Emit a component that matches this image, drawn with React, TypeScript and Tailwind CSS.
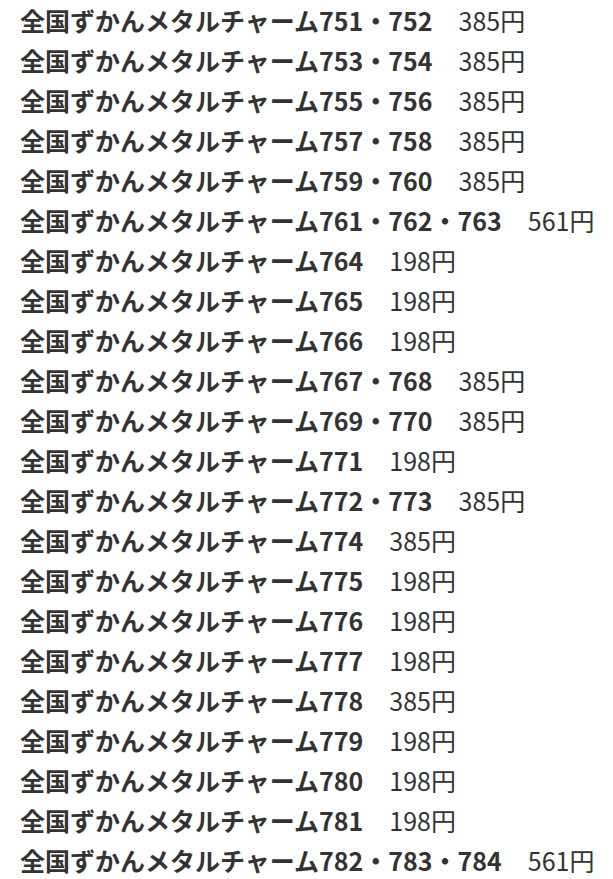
const items: [string, string][] = [
  ['751・752', '385円'],
  ['753・754', '385円'],
  ['755・756', '385円'],
  ['757・758', '385円'],
  ['759・760', '385円'],
  ['761・762・763', '561円'],
  ['764', '198円'],
  ['765', '198円'],
  ['766', '198円'],
  ['767・768', '385円'],
  ['769・770', '385円'],
  ['771', '198円'],
  ['772・773', '385円'],
  ['774', '385円'],
  ['775', '198円'],
  ['776', '198円'],
  ['777', '198円'],
  ['778', '385円'],
  ['779', '198円'],
  ['780', '198円'],
  ['781', '198円'],
  ['782・783・784', '561円'],
]

export default function App() {
  return (
    <div
      className="bg-white px-5 text-[#333] text-[25px] leading-[40px]"
      style={{ fontFamily: '"Noto Sans CJK JP", sans-serif' }}
    >
      {items.map(([num, price]) => (
        <div key={num} className="flex whitespace-nowrap">
          <span className="font-bold">全国ずかんメタルチャーム{num}</span>
          <span className="ml-[26px]">{price}</span>
        </div>
      ))}
    </div>
  )
}
